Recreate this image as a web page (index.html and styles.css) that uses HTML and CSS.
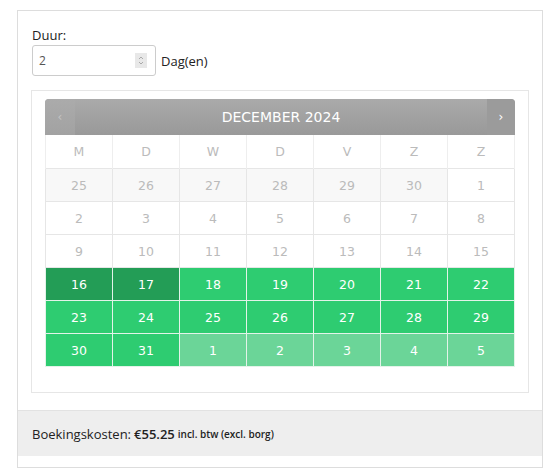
FILE: index.html
```html
<!DOCTYPE html>
<html lang="nl">
<head>
  <meta charset="UTF-8" />
  <title>Reservering</title>
  <link rel="stylesheet" href="styles.css">
</head>
<body>
  <div class="panel">
    <div class="panel-body">
      <label class="label">Duur:</label>
      <div class="duration">
        <div class="input">
          <span class="value">2</span>
          <span class="spinner">
            <svg width="12" height="15" viewBox="0 0 12 15">
              <path d="M4 6 L6 4 L8 6" fill="none" stroke="#aaa" stroke-width="1"/>
              <path d="M4 9 L6 11 L8 9" fill="none" stroke="#aaa" stroke-width="1"/>
            </svg>
          </span>
        </div>
        <span class="unit">Dag(en)</span>
      </div>

      <div class="cal-box">
        <div class="cal-head">
          <span class="nav prev">&#8249;</span>
          <span class="title">DECEMBER 2024</span>
          <span class="nav next">&#8250;</span>
        </div>
        <table class="cal">
          <thead>
            <tr><th>M</th><th>D</th><th>W</th><th>D</th><th>V</th><th>Z</th><th>Z</th></tr>
          </thead>
          <tbody>
            <tr><td class="old">25</td><td class="old">26</td><td class="old">27</td><td class="old">28</td><td class="old">29</td><td class="old">30</td><td class="past">1</td></tr>
            <tr><td class="past">2</td><td class="past">3</td><td class="past">4</td><td class="past">5</td><td class="past">6</td><td class="past">7</td><td class="past">8</td></tr>
            <tr><td class="past">9</td><td class="past">10</td><td class="past">11</td><td class="past">12</td><td class="past">13</td><td class="past">14</td><td class="past">15</td></tr>
            <tr><td class="sel">16</td><td class="sel">17</td><td class="free">18</td><td class="free">19</td><td class="free">20</td><td class="free">21</td><td class="free">22</td></tr>
            <tr><td class="free">23</td><td class="free">24</td><td class="free">25</td><td class="free">26</td><td class="free">27</td><td class="free">28</td><td class="free">29</td></tr>
            <tr><td class="free">30</td><td class="free">31</td><td class="next-m">1</td><td class="next-m">2</td><td class="next-m">3</td><td class="next-m">4</td><td class="next-m">5</td></tr>
          </tbody>
        </table>
      </div>
    </div>
    <div class="panel-foot">
      Boekingskosten: <span class="price">€55.25</span> <span class="note">incl. btw (excl. borg)</span>
    </div>
  </div>
</body>
</html>
```

FILE: styles.css
```css
body { margin: 0; background: #fff; font-family: "Open Sans", sans-serif; font-size: 13px; color: #222; }
.panel { margin: 10px 0 0 17px; width: 524px; border: 1px solid #ddd; padding-bottom: 11px; }
.panel-body { padding: 15px 13px 17px 14px; }
.label { display: block; line-height: 18px; }
.duration { display: flex; align-items: center; gap: 5px; margin-top: 1px; }
.input { height: 29px; border: 1px solid #ccc; border-radius: 3px; display: flex; align-items: center; justify-content: space-between; padding: 0 8px 0 6px; width: 108px; }
.value { color: #555; font-size: 12px; }
.spinner { width: 12px; height: 15px; background: #e8e8e8; display: flex; }
.unit { font-size: 13px; }
.cal-box { margin: 14px 0 0 -1px; border: 1px solid #e6e6e6; padding: 8px 13px 25px 13px; }
.cal-head { height: 36px; display: flex; align-items: center; background: linear-gradient(#aaa, #999); border-radius: 4px 4px 0 0; color: #fff; font-family: "DejaVu Sans", Verdana, sans-serif; }
.nav { width: 30px; height: 36px; display: flex; align-items: center; justify-content: center; font-size: 12px; }
.prev { color: #c4c4c4; background: linear-gradient(#ababab, #a2a2a2); border-radius: 4px 0 0 0; }
.next { width: 28px; background: #9b9b9b; border-radius: 0 4px 0 0; }
.title { flex: 1; text-align: center; font-size: 14px; }
.cal { width: 100%; border-collapse: collapse; table-layout: fixed; font-family: "DejaVu Sans", Verdana, sans-serif; font-size: 12.5px; }
.cal th { height: 33px; padding: 0; font-weight: normal; color: #bbb; background: #fff; border-left: 1px solid #eee; border-right: 1px solid #eee; }
.cal td { height: 32px; padding: 0; text-align: center; border: 1px solid #e6e6e6; color: #bbb; }
.cal td.old { background: #f8f8f8; }
.cal td.past { background: #fff; }
.cal td.sel { background: #239d56; color: #fff; border-color: #e3f3e9; }
.cal td.free { background: #2ecc71; color: #fff; border-color: #e3f3e9; }
.cal td.next-m { background: #6bd598; color: #fff; border-color: #e3f3e9; }
.panel-foot { background: #eee; border-top: 1px solid #e2e2e2; height: 45px; display: flex; align-items: center; padding-left: 14px; font-size: 13px; }
.price { font-weight: 600; margin-left: 3px; }
.note { font-size: 10px; font-weight: 600; margin-left: 3px; }
```
